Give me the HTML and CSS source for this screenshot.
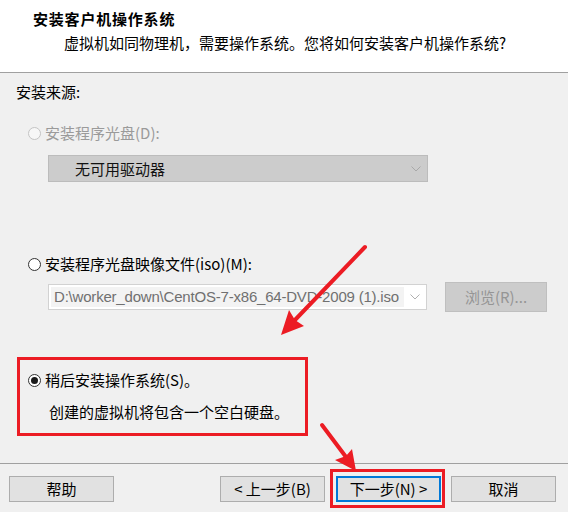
FILE: index.html
```html
<!DOCTYPE html>
<html lang="zh-CN">
<head>
<meta charset="utf-8">
<title>新建虚拟机向导</title>
<link rel="stylesheet" href="styles.css">
</head>
<body>
<div class="page">
  <header class="header">
    <div class="title">安装客户机操作系统</div>
    <div class="subtitle">虚拟机如同物理机，需要操作系统。您将如何安装客户机操作系统?</div>
  </header>

  <main class="content">
    <div class="source-label">安装来源:</div>

    <div class="option option-disc">
      <span class="radio radio-disabled"></span>
      <span class="option-text disabled-text">安装程序光盘(D):</span>
    </div>
    <div class="select select-disabled">
      <span class="select-text">无可用驱动器</span>
      <svg class="chevron" width="10" height="6" viewBox="0 0 10 6"><path d="M0.5 0.5 L5 5 L9.5 0.5" fill="none" stroke="#a8a8a8" stroke-width="1"/></svg>
    </div>

    <div class="option option-iso">
      <span class="radio"></span>
      <span class="option-text">安装程序光盘映像文件(iso)(M):</span>
    </div>
    <div class="iso-row">
      <div class="combo">
        <span class="combo-text">D:\worker_down\CentOS-7-x86_64-DVD-2009 (1).iso</span>
        <svg class="chevron" width="10" height="6" viewBox="0 0 10 6"><path d="M0.5 0.5 L5 5 L9.5 0.5" fill="none" stroke="#b0b0b0" stroke-width="1"/></svg>
      </div>
      <div class="btn btn-disabled browse">浏览(R)...</div>
    </div>

    <div class="later-box">
      <div class="option">
        <span class="radio radio-checked"></span>
        <span class="option-text">稍后安装操作系统(S)。</span>
      </div>
      <div class="later-desc">创建的虚拟机将包含一个空白硬盘。</div>
    </div>
  </main>

  <footer class="footer">
    <div class="btn">帮助</div>
    <div class="nav">
      <div class="btn">&lt; 上一步(B)</div>
      <div class="btn btn-default highlighted">下一步(N) &gt;</div>
      <div class="btn">取消</div>
    </div>
  </footer>

  <svg class="arrows" width="568" height="512" viewBox="0 0 568 512">
    <line x1="365" y1="247" x2="294" y2="321" stroke="#ec1c24" stroke-width="4" stroke-linecap="round"/>
    <polygon points="281,335 289,310 295,320 304,326" fill="#ec1c24"/>
    <line x1="322" y1="425" x2="346" y2="457" stroke="#ec1c24" stroke-width="4" stroke-linecap="round"/>
    <polygon points="356,471 335,460 346,456 352,449" fill="#ec1c24"/>
  </svg>
</div>
</body>
</html>
```

FILE: styles.css
```css
html, body {
  margin: 0;
  padding: 0;
}

body {
  background: #f0f0f0;
  font-family: "Noto Sans CJK SC", "Microsoft YaHei", sans-serif;
  font-size: 15px;
  color: #000;
}

.page {
  position: relative;
  width: 568px;
  height: 512px;
  overflow: hidden;
  display: flex;
  flex-direction: column;
}

.header {
  background: #fff;
  height: 73px;
  box-sizing: border-box;
  border-bottom: 1px solid #a0a0a0;
  padding: 9px 0 0 33px;
}

.title {
  font-weight: bold;
  line-height: 20px;
  letter-spacing: 0.8px;
}

.subtitle {
  margin-top: 4px;
  padding-left: 31px;
  line-height: 20px;
}

.content {
  padding: 9px 0 0 16px;
}

.source-label {
  line-height: 20px;
}

.option {
  display: flex;
  align-items: center;
  height: 20px;
  gap: 4px;
  margin-left: 12px;
}

.option-disc {
  margin-top: 21px;
}

.option-iso {
  margin-top: 72px;
}

.radio {
  width: 13px;
  height: 13px;
  box-sizing: border-box;
  border: 1px solid #333;
  border-radius: 50%;
  background: #fff;
  position: relative;
  flex: none;
}

.radio-disabled {
  border-color: #c4c4c4;
  background: #f7f7f7;
}

.radio-checked::after {
  content: "";
  position: absolute;
  left: 2px;
  top: 2px;
  width: 7px;
  height: 7px;
  border-radius: 50%;
  background: #1a1a1a;
}

.option-text {
  line-height: 20px;
}

.disabled-text {
  color: #9a9a9a;
}

.select {
  margin: 12px 0 0 32px;
  width: 380px;
  height: 27px;
  box-sizing: border-box;
  border: 1px solid #bcbcbc;
  background: #cccccc;
  display: flex;
  align-items: center;
  justify-content: space-between;
  padding: 0 6px 0 26px;
}

.select-text {
  color: #111;
  line-height: 20px;
}

.iso-row {
  margin: 8px 0 0 32px;
  display: flex;
  align-items: center;
  height: 30px;
}

.combo {
  width: 379px;
  height: 26px;
  box-sizing: border-box;
  border: 1px solid #d2d2d2;
  background: #fff;
  display: flex;
  align-items: center;
  padding: 2px 6px 2px 2px;
}

.combo-text {
  height: 20px;
  line-height: 20px;
  width: 353px;
  flex: none;
  padding-left: 3px;
  box-sizing: border-box;
  background: #f3f3f3;
  color: #707070;
  white-space: nowrap;
  font-family: "Liberation Sans", Arial, sans-serif;
  letter-spacing: -0.2px;
}

.combo .chevron {
  margin-left: auto;
}

.btn {
  width: 105px;
  height: 26px;
  box-sizing: border-box;
  border: 1px solid #adadad;
  background: #e1e1e1;
  display: flex;
  align-items: center;
  justify-content: center;
  line-height: 20px;
  position: relative;
}

.btn-disabled {
  background: #cccccc;
  border-color: #bfbfbf;
  color: #959595;
}

.browse {
  margin-left: 18px;
  width: 102px;
  height: 30px;
}

.later-box {
  margin: 45px 0 0 1px;
  width: 291px;
  height: 79px;
  box-sizing: border-box;
  border: 3px solid #ec1c24;
  padding: 10px 0 0 8px;
}

.later-box .option {
  margin-left: 0;
}

.later-desc {
  margin: 12px 0 0 21px;
  line-height: 20px;
}

.footer {
  margin-top: auto;
  height: 49px;
  box-sizing: border-box;
  border-top: 1px solid #a0a0a0;
  padding: 12px 12px 0 9px;
  display: flex;
  align-items: flex-start;
}

.nav {
  margin-left: auto;
  display: flex;
  gap: 11px;
}

.nav .btn:last-child {
  margin-left: -1px;
}

.btn-default {
  border: 2px solid #0078d7;
}

.highlighted::after {
  content: "";
  position: absolute;
  left: -8px;
  right: -6px;
  top: -9px;
  bottom: -8px;
  border: 3px solid #ec1c24;
}

.arrows {
  position: absolute;
  left: 0;
  top: 0;
  pointer-events: none;
}
```
